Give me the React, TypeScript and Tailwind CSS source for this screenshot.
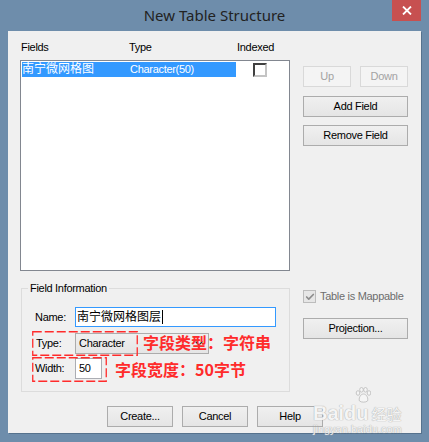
import { Check } from 'lucide-react';

const ui = "font-['Liberation_Sans','Noto_Sans_CJK_SC',sans-serif] text-[11px] tracking-[-0.3px] text-black";
const btn =
  'flex h-[21px] items-center justify-center border border-[#acacac] bg-linear-to-b from-[#f0f0f0] to-[#e5e5e5]';

function DashBox({ className, w, h }: { className: string; w: number; h: number }) {
  return (
    <svg className={className} width={w} height={h}>
      <rect
        x={0.75}
        y={0.75}
        width={w - 1.5}
        height={h - 1.5}
        fill="none"
        stroke="#ff2b2b"
        strokeWidth={1.3}
        strokeDasharray="9 3"
      />
    </svg>
  );
}

export default function App() {
  return (
    <div className={`relative h-[442px] w-[429px] bg-[#6e8dab] ${ui}`}>
      {/* title bar */}
      <div className="flex h-[31px] items-center justify-center font-['Noto_Sans',sans-serif] text-[15px] tracking-normal text-[#222]">
        New Table Structure
      </div>
      <div className="absolute left-[392px] top-0 flex h-[21px] w-[29px] items-center justify-center bg-[#c75050]">
        <svg width="10" height="9" viewBox="0 0 10 9">
          <path d="M1 0.5 L9 8.5 M9 0.5 L1 8.5" stroke="white" strokeWidth="1.8" />
        </svg>
      </div>

      {/* client area */}
      <div className="relative ml-[8px] h-[402px] w-[413px] bg-[#f0f0f0] pt-[10px] shadow-[1px_1px_0_#56728d]">
        <div className="flex">
          <div className="ml-[12px] w-[270px]">
            <div className="flex h-[13px] leading-[13px]">
              <span className="ml-px w-[108px]">Fields</span>
              <span className="w-[108px]">Type</span>
              <span>Indexed</span>
            </div>
            <div className="mt-[6px] h-[211px] border border-[#828790] bg-white pl-px pt-px">
              <div className="flex h-[15px] items-center">
                <div className="flex h-[15px] w-[214px] items-center bg-[#3399ff] text-white">
                  <span className="w-[108px] text-[12px] leading-[15px] tracking-normal">南宁微网格图</span>
                  <span>Character(50)</span>
                </div>
                <div className="ml-[17px] h-[14px] w-[14px] border-2 border-t-[#404040] border-l-[#404040] border-r-[#c4c4c4] border-b-[#c4c4c4] bg-white" />
              </div>
            </div>
          </div>

          <div className="ml-[13px] w-[105px] pt-[25px]">
            <div className="flex gap-[9px]">
              <div className={`${btn} w-[48px] border-[#d9d9d9] from-[#f4f4f4] to-[#f4f4f4] text-[#a3a3a3]`}>Up</div>
              <div className={`${btn} w-[48px] border-[#d9d9d9] from-[#f4f4f4] to-[#f4f4f4] text-[#a3a3a3]`}>Down</div>
            </div>
            <div className={`${btn} mt-[9px] w-[105px]`}>Add Field</div>
            <div className={`${btn} mt-[8px] w-[105px]`}>Remove Field</div>
          </div>
        </div>

        <div className="mt-[17px] flex">
          <div className="relative ml-[13px] h-[104px] w-[269px] border border-[#dcdcdc] pl-[13px] pt-[18px]">
            <span className="absolute -top-[7px] left-[6px] bg-[#f0f0f0] px-[2px] leading-[13px]">Field Information</span>

            <div className="flex h-[20px] items-center">
              <span className="w-[40px]">Name:</span>
              <div className="flex h-[20px] w-[201px] items-center border border-[#3399ff] bg-white pl-px text-[12px] tracking-normal">
                南宁微网格图层
                <span className="ml-px inline-block h-[14px] w-px bg-black" />
              </div>
            </div>
            <div className="mt-[6px] flex h-[21px] items-center">
              <span className="w-[40px] pl-px">Type:</span>
              <div className={`${btn} relative w-[134px] justify-start pl-[3px]`}>
                Character
                <svg className="absolute right-[5px] top-[7px]" width="8" height="5" viewBox="0 0 8 5">
                  <path d="M0.5 0.5 L4 4 L7.5 0.5" fill="none" stroke="#333" strokeWidth="1.2" />
                </svg>
              </div>
            </div>
            <div className="mt-[4px] flex h-[21px] items-center">
              <span className="w-[40px]">Width:</span>
              <div className="flex h-[21px] w-[27px] items-center border border-[#abadb3] bg-white pl-[3px]">50</div>
            </div>

            <DashBox className="absolute left-[10px] top-[42px]" w={106} h={25} />
            <DashBox className="absolute left-[10px] top-[68px]" w={75} h={25} />
            <span className="absolute left-[121px] top-[43px] font-['Noto_Sans_CJK_SC',sans-serif] text-[16px] font-bold leading-[20px] tracking-normal text-[#ff2b2b]">
              字段类型：字符串
            </span>
            <span className="absolute left-[93px] top-[70px] font-['Noto_Sans_CJK_SC',sans-serif] text-[16px] font-bold leading-[20px] tracking-normal text-[#ff2b2b]">
              字段宽度：50字节
            </span>
          </div>

          <div className="ml-[13px] w-[105px] pt-[2px]">
            <div className="flex h-[13px] items-center gap-[4px] text-[#6d6d6d]">
              <div className="flex h-[13px] w-[13px] items-center justify-center border border-[#bcbcbc] bg-[#e6e6e6]">
                <Check className="h-[10px] w-[10px] text-[#8c8c8c]" strokeWidth={4} />
              </div>
              <span>Table is Mappable</span>
            </div>
            <div className={`${btn} mt-[15px] w-[105px]`}>Projection...</div>
          </div>
        </div>

        <div className="ml-[99px] mt-[14px] flex gap-[9px]">
          <div className={`${btn} w-[66px] border-[#3399ff]`}>Create...</div>
          <div className={`${btn} w-[66px]`}>Cancel</div>
          <div className={`${btn} w-[66px]`}>Help</div>
        </div>

        {/* watermark */}
        <div className="pointer-events-none absolute left-[305px] top-[356px] flex flex-col items-start tracking-normal text-[#f6f6f6] opacity-90 [text-shadow:0_0_1px_#a9a9a9,0_0_1px_#a9a9a9]">
          <svg className="ml-[42px]" width="16" height="16" viewBox="0 0 16 16">
            <g fill="#f6f6f6" stroke="#b5b5b5" strokeWidth="0.8">
              <ellipse cx="3" cy="6" rx="1.8" ry="2.3" />
              <ellipse cx="6.5" cy="2.8" rx="1.8" ry="2.3" />
              <ellipse cx="10.5" cy="2.8" rx="1.8" ry="2.3" />
              <ellipse cx="14" cy="6" rx="1.8" ry="2.3" />
              <path d="M8.5 7 C5 7 3.5 12 4.5 14 C6 15.5 11 15.5 12.5 14 C13.5 12 12 7 8.5 7 Z" />
            </g>
          </svg>
          <div className="flex items-end leading-[20px]">
            <span className="font-['Liberation_Sans',sans-serif] text-[20px] font-bold">Baidu</span>
            <span className="ml-[3px] font-['Noto_Sans_CJK_SC',sans-serif] text-[15px] leading-[19px]">经验</span>
          </div>
          <span className="font-['Liberation_Sans',sans-serif] text-[11px] leading-[13px]">jingyan.baidu.com</span>
        </div>
      </div>
    </div>
  );
}
